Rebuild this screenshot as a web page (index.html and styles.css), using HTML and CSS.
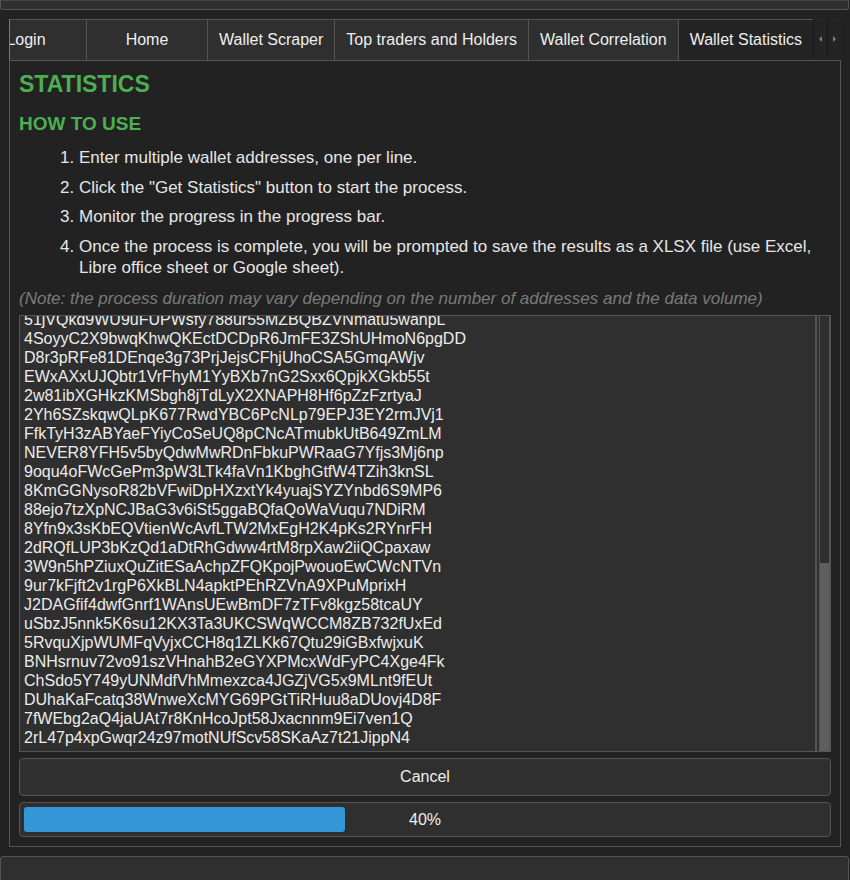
FILE: index.html
```html
<!DOCTYPE html>
<html lang="en">
<head>
<meta charset="utf-8">
<title>Wallet Statistics</title>
<link rel="stylesheet" href="styles.css">
</head>
<body>
<div class="topbar"></div>
<div class="tabbar">
  <div class="tabclip">
    <div class="tabs">
      <div class="tab">Login</div>
      <div class="tab">Home</div>
      <div class="tab">Wallet Scraper</div>
      <div class="tab">Top traders and Holders</div>
      <div class="tab">Wallet Correlation</div>
      <div class="tab tab-active">Wallet Statistics</div>
    </div>
  </div>
  <div class="arrows">
    <div class="arrow"><span class="tri tri-left"></span></div>
    <div class="arrow"><span class="tri tri-right"></span></div>
  </div>
</div>
<div class="panel">
  <h1 class="title">STATISTICS</h1>
  <h2 class="subtitle">HOW TO USE</h2>
  <ol class="steps">
    <li>Enter multiple wallet addresses, one per line.</li>
    <li>Click the "Get Statistics" button to start the process.</li>
    <li>Monitor the progress in the progress bar.</li>
    <li>Once the process is complete, you will be prompted to save the results as a XLSX file (use Excel, Libre office sheet or Google sheet).</li>
  </ol>
  <p class="note">(Note: the process duration may vary depending on the number of addresses and the data volume)</p>
  <div class="textarea">
    <div class="lines">
      <div>51jVQkd9WU9uFUPWsfy788ur55MZBQBZVNmatu5wanpL</div>
      <div>4SoyyC2X9bwqKhwQKEctDCDpR6JmFE3ZShUHmoN6pgDD</div>
      <div>D8r3pRFe81DEnqe3g73PrjJejsCFhjUhoCSA5GmqAWjv</div>
      <div>EWxAXxUJQbtr1VrFhyM1YyBXb7nG2Sxx6QpjkXGkb55t</div>
      <div>2w81ibXGHkzKMSbgh8jTdLyX2XNAPH8Hf6pZzFzrtyaJ</div>
      <div>2Yh6SZskqwQLpK677RwdYBC6PcNLp79EPJ3EY2rmJVj1</div>
      <div>FfkTyH3zABYaeFYiyCoSeUQ8pCNcATmubkUtB649ZmLM</div>
      <div>NEVER8YFH5v5byQdwMwRDnFbkuPWRaaG7Yfjs3Mj6np</div>
      <div>9oqu4oFWcGePm3pW3LTk4faVn1KbghGtfW4TZih3knSL</div>
      <div>8KmGGNysoR82bVFwiDpHXzxtYk4yuajSYZYnbd6S9MP6</div>
      <div>88ejo7tzXpNCJBaG3v6iSt5ggaBQfaQoWaVuqu7NDiRM</div>
      <div>8Yfn9x3sKbEQVtienWcAvfLTW2MxEgH2K4pKs2RYnrFH</div>
      <div>2dRQfLUP3bKzQd1aDtRhGdww4rtM8rpXaw2iiQCpaxaw</div>
      <div>3W9n5hPZiuxQuZitESaAchpZFQKpojPwouoEwCWcNTVn</div>
      <div>9ur7kFjft2v1rgP6XkBLN4apktPEhRZVnA9XPuMprixH</div>
      <div>J2DAGfif4dwfGnrf1WAnsUEwBmDF7zTFv8kgz58tcaUY</div>
      <div>uSbzJ5nnk5K6su12KX3Ta3UKCSWqWCCM8ZB732fUxEd</div>
      <div>5RvquXjpWUMFqVyjxCCH8q1ZLKk67Qtu29iGBxfwjxuK</div>
      <div>BNHsrnuv72vo91szVHnahB2eGYXPMcxWdFyPC4Xge4Fk</div>
      <div>ChSdo5Y749yUNMdfVhMmexzca4JGZjVG5x9MLnt9fEUt</div>
      <div>DUhaKaFcatq38WnweXcMYG69PGtTiRHuu8aDUovj4D8F</div>
      <div>7fWEbg2aQ4jaUAt7r8KnHcoJpt58Jxacnnm9Ei7ven1Q</div>
      <div>2rL47p4xpGwqr24z97motNUfScv58SKaAz7t21JippN4</div>
    </div>
    <div class="scrollbar">
      <div class="track"><div class="thumb"></div></div>
    </div>
  </div>
  <button class="cancel" type="button">Cancel</button>
  <div class="progress">
    <div class="fill" style="width: 40%"></div>
    <span class="progress-label">40%</span>
  </div>
</div>
<div class="bottombar"></div>
</body>
</html>
```
FILE: styles.css
```css
* { box-sizing: border-box; }

html, body {
  margin: 0;
  padding: 0;
  background: #222222;
  color: #e6e6e6;
  font-family: "Liberation Sans", Arial, sans-serif;
  font-size: 16px;
  overflow: hidden;
  height: 880px;
}

.topbar {
  height: 10px;
  margin: 0 1px 0 0;
  background: #2f2f2f;
  border: 1px solid #555555;
  border-top-color: #444444;
  border-radius: 0 0 3px 3px;
}

.tabbar {
  display: flex;
  margin: 9px 0 0 9px;
  width: 832px;
  height: 41px;
}

.tabclip {
  flex: 1;
  overflow: hidden;
  border-left: 1px solid #3a86d0;
}

.tabs {
  display: flex;
  margin-left: -44px;
  height: 41px;
}

.tab {
  flex: none;
  min-width: 121px;
  height: 41px;
  padding: 0 11px;
  display: flex;
  align-items: center;
  justify-content: center;
  background: #2f2f2f;
  border-top: 1px solid #555555;
  border-right: 1px solid #555555;
  color: #eeeeee;
  white-space: nowrap;
}

.tab-active {
  background: #232323;
}

.arrows {
  display: flex;
  width: 28px;
  height: 40px;
  background: #1c1c1c;
}

.arrow {
  flex: 1;
  display: flex;
  align-items: center;
  justify-content: center;
  background: #242424;
  border-left: 1px solid #181818;
}

.tri {
  width: 0;
  height: 0;
  border-top: 3px solid transparent;
  border-bottom: 3px solid transparent;
}

.tri-left { border-right: 3px solid #7a7a7a; }
.tri-right { border-left: 3px solid #7a7a7a; }

.panel {
  margin-left: 9px;
  width: 832px;
  border: 1px solid #555555;
  padding: 9px 9px 9px 9px;
}

.title {
  margin: 0;
  font-size: 23px;
  line-height: 28px;
  font-weight: bold;
  color: #4caf50;
}

.subtitle {
  margin: 14px 0 0 0;
  font-size: 19px;
  line-height: 23px;
  font-weight: bold;
  color: #4caf50;
}

.steps {
  margin: 12px 0 0 0;
  padding: 0 0 0 60px;
  font-size: 17px;
  line-height: 21px;
}

.steps li {
  margin-bottom: 8.5px;
}

.steps li:last-child {
  margin-bottom: 0;
}

.note {
  margin: 11.5px 0 0 0;
  font-size: 17px;
  line-height: 19px;
  font-style: italic;
  color: #7a7a7a;
}

.textarea {
  margin-top: 7px;
  height: 437px;
  display: flex;
  background: #2f2f2f;
  border: 1px solid #555555;
  overflow: hidden;
}

.lines {
  flex: 1;
  padding-left: 4px;
  margin-top: -6px;
  line-height: 19px;
  color: #ececec;
  white-space: nowrap;
}

.scrollbar {
  width: 15px;
  display: flex;
  border-left: 2px solid #555555;
  padding-left: 2px;
  background: #2f2f2f;
}

.track {
  width: 11px;
  display: flex;
  flex-direction: column;
  border-left: 1px solid #555555;
  border-right: 1px solid #555555;
  background: #2f2f2f;
}

.thumb {
  margin-top: auto;
  height: 188px;
  background: #5e5e5e;
}

.cancel {
  display: block;
  width: 100%;
  height: 38px;
  margin-top: 6px;
  background: #2f2f2f;
  border: 1px solid #555555;
  border-radius: 4px;
  color: #eeeeee;
  font-family: "Liberation Sans", Arial, sans-serif;
  font-size: 16px;
  padding: 0;
}

.progress {
  position: relative;
  margin-top: 6px;
  height: 35px;
  padding: 4px;
  background: #2f2f2f;
  border: 1px solid #555555;
  border-radius: 4px;
}

.fill {
  height: 25px;
  background: #3396d6;
  border-radius: 3px;
}

.progress-label {
  position: absolute;
  left: 0;
  right: 0;
  top: 0;
  bottom: 0;
  display: flex;
  align-items: center;
  justify-content: center;
  color: #eeeeee;
}

.bottombar {
  margin: 9px 1px 0 0;
  height: 30px;
  background: #2f2f2f;
  border: 1px solid #555555;
  border-radius: 3px 3px 0 0;
}
```
